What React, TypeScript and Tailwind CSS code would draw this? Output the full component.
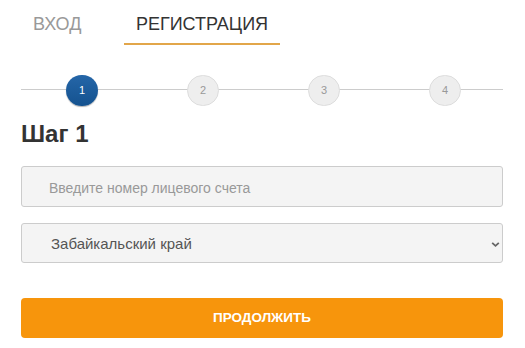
import React from "react";

export default function App() {
  const steps = [1, 2, 3, 4];
  return (
    <div className="w-[525px] h-[348px] bg-white overflow-hidden" style={{ fontFamily: '"Liberation Sans", Arial, sans-serif' }}>
      <div className="pl-[21px] w-[503px]">
        <div className="flex h-[45px] items-end">
          <div className="w-[103px] h-[45px] flex items-start pl-[12px] pt-[14px] text-[18px] leading-[20px] text-[#999999]">ВХОД</div>
          <div className="w-[156px] h-[45px] flex items-start justify-center pt-[14px] text-[18px] leading-[20px] text-[#333333] border-b-[2px] border-[#e2a64a]">РЕГИСТРАЦИЯ</div>
        </div>
        <div className="relative mt-[30px] h-[31px]">
          <div className="absolute left-0 right-0 top-[14px] h-px bg-[#cccccc]" />
          <div className="relative flex h-[31px] pl-[45px] gap-[89px]">
            {steps.map((s) =>
              s === 1 ? (
                <div key={s} className="w-[32px] h-[31px] rounded-full bg-gradient-to-b from-[#2566a8] to-[#14528f] text-white text-[11px] flex items-center justify-center shadow-[0_1px_1px_rgba(0,0,0,0.3)]">
                  {s}
                </div>
              ) : (
                <div key={s} className="w-[32px] h-[31px] rounded-full bg-[#eeeeee] border border-[#dddddd] text-[#999999] text-[11px] flex items-center justify-center">
                  {s}
                </div>
              )
            )}
          </div>
        </div>
        <div className="mt-[14px] text-[24px] font-bold text-[#333333] leading-[28px]">Шаг 1</div>
        <div className="mt-[18px] h-[41px] rounded-[3px] border border-[#cccccc] bg-[#f4f4f4] flex items-center pl-[27px] pt-[3px] text-[14px] text-[#999999]">
          <span>Введите номер лицевого счета</span>
        </div>
        <div className="mt-[16px] h-[40px] rounded-[3px] border border-[#cccccc] bg-[#f4f4f4] flex items-center justify-between pl-[29px] pr-[2px] pt-[2px] text-[15px] text-[#555555]">
          <span>Забайкальский край</span>
          <svg width="9" height="7" viewBox="0 0 9 7">
            <path d="M1.2 1.8 L4.5 4.8 L7.8 1.8" fill="none" stroke="#666" strokeWidth="1.8" />
          </svg>
        </div>
        <div className="mt-[35px] h-[40px] rounded-[4px] bg-[#f7950c] flex items-center justify-center text-white font-bold text-[13.5px]">
          ПРОДОЛЖИТЬ
        </div>
      </div>
    </div>
  );
}
